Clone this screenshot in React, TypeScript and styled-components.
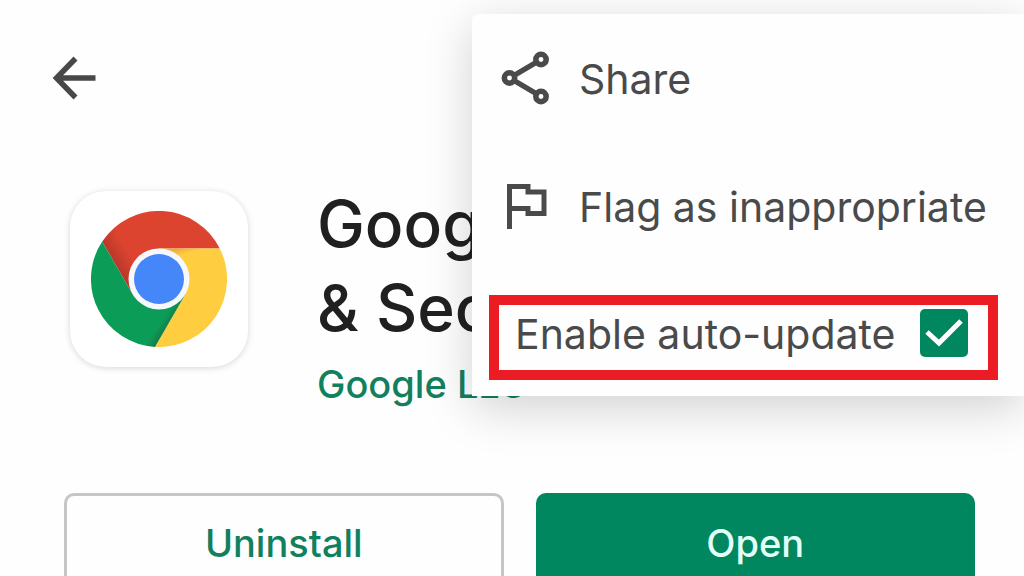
import React from 'react';
import styled, { createGlobalStyle } from 'styled-components';

const GlobalStyle = createGlobalStyle`
  * { box-sizing: border-box; }
  body {
    margin: 0;
    background: #fefefe;
    color: #202020;
    font-family: Inter, Roboto, sans-serif;
  }
`;

const Page = styled.div`
  position: relative;
  height: 100vh;
  overflow: hidden;
  padding: 54px 49px 0 64px;
`;

const BackButton = styled.button`
  display: block;
  margin: 0 0 0 -14px;
  padding: 0;
  border: 0;
  background: none;
  color: #484848;
  line-height: 0;
`;

const AppHeader = styled.header`
  display: flex;
  gap: 69px;
  margin-top: 80px;
  padding-left: 6px;
`;

const AppIcon = styled.div`
  display: flex;
  flex: none;
  align-items: center;
  justify-content: center;
  width: 178px;
  height: 176px;
  margin-top: 9px;
  border-radius: 36px;
  background: #fff;
  box-shadow: 0 1px 6px rgba(0, 0, 0, 0.16);
`;

const Title = styled.h1`
  margin: 0;
  font-size: 64px;
  font-weight: 500;
  line-height: 84px;
  white-space: nowrap;
`;

const Developer = styled.a`
  display: block;
  margin-top: 12px;
  color: #11805e;
  font-size: 38px;
  font-weight: 500;
  line-height: 44px;
  text-decoration: none;
`;

const Actions = styled.div`
  display: grid;
  grid-template-columns: 1fr 1fr;
  gap: 32px;
  margin-top: 87px;
`;

const ActionButton = styled.button<{ $filled?: boolean }>`
  height: 100px;
  border: 3px solid ${(p) => (p.$filled ? '#01875f' : '#c6c6c6')};
  border-radius: 10px;
  background: ${(p) => (p.$filled ? '#01875f' : '#fefefe')};
  color: ${(p) => (p.$filled ? '#e4fff6' : '#11805e')};
  font-family: inherit;
  font-size: 38px;
  font-weight: 500;
`;

const Menu = styled.div`
  position: absolute;
  top: 14px;
  left: 472px;
  right: 0;
  padding: 17px 26px 16px 17px;
  border-radius: 6px 0 0 0;
  background: #fefefe;
  box-shadow: 0 12px 48px rgba(0, 0, 0, 0.18);
  color: #4a4a4a;
  font-size: 41px;
`;

const MenuItem = styled.button`
  display: flex;
  align-items: center;
  gap: 24px;
  width: 100%;
  height: 96px;
  margin-bottom: 32px;
  padding: 0 0 0 10px;
  border: 0;
  background: none;
  color: inherit;
  font: inherit;
  white-space: nowrap;
`;

const CheckItem = styled.label`
  display: flex;
  align-items: center;
  justify-content: space-between;
  height: 85px;
  margin-top: 40px;
  padding: 0 20px 8px 16px;
  border: 10px solid #ec1c24;
  white-space: nowrap;
`;

const CheckWrap = styled.span`
  position: relative;
  width: 48px;
  height: 48px;
  margin-bottom: 2px;
`;

const Checkbox = styled.input`
  appearance: none;
  display: block;
  width: 48px;
  height: 48px;
  margin: 0;
  border-radius: 5px;
  background: #01875f;
`;

const Tick = styled.svg`
  position: absolute;
  inset: 0;
  pointer-events: none;
`;

const BackIcon = () => (
  <svg width="48" height="48" viewBox="0 0 48 48" fill="none" stroke="currentColor" strokeWidth="5.500" aria-hidden="true">
    <path d="M45.500 24H7M25.500 4.500L6.500 24l19 19.500" />
  </svg>
);

const ShareIcon = () => (
  <svg width="56" height="56" viewBox="0 0 56 56" fill="none" stroke="currentColor" strokeWidth="5.500" aria-hidden="true">
    <path d="M15 24.500L37 11.500M15 29.500l22 13" />
    <circle cx="10.500" cy="27" r="5.200" />
    <circle cx="42" cy="8.500" r="5.200" />
    <circle cx="42" cy="45.500" r="5.200" />
  </svg>
);

const FlagIcon = () => (
  <svg width="56" height="56" viewBox="0 0 56 56" fill="none" stroke="currentColor" strokeWidth="5" aria-hidden="true">
    <path d="M10.500 50V7.500H29V13H45V34.500H29V29.500H10.500" />
  </svg>
);

const ChromeLogo = () => (
  <svg width="136" height="136" viewBox="-68 -68 136 136" role="img" aria-label="Chrome">
    <defs>
      <linearGradient id="red" gradientUnits="userSpaceOnUse" x1="-42" y1="-11" x2="-27" y2="-20">
        <stop offset="0" stopColor="#b8372a" />
        <stop offset="1" stopColor="#dc4430" />
      </linearGradient>
      <linearGradient id="yellow" gradientUnits="userSpaceOnUse" x1="20" y1="-31" x2="22" y2="-24">
        <stop offset="0" stopColor="#eba936" />
        <stop offset="1" stopColor="#fecd40" />
      </linearGradient>
      <linearGradient id="green" gradientUnits="userSpaceOnUse" x1="11" y1="42" x2="5" y2="38">
        <stop offset="0" stopColor="#14804a" />
        <stop offset="1" stopColor="#0b9d58" />
      </linearGradient>
    </defs>
    <path fill="url(#red)" d="M60.800-30.500H0V0L-26.400 15.250L-56.800-37.400A68 68 0 0 1 60.800-30.500Z" />
    <path fill="url(#yellow)" d="M60.800-30.500H0V0L26.400 15.250L-4 67.900A68 68 0 0 0 60.800-30.500Z" />
    <path fill="url(#green)" d="M-4 67.900L26.400 15.250L0 0L-26.400 15.250L-56.800-37.400A68 68 0 0 0-4 67.900Z" />
    <circle r="30.500" fill="#f7f8fc" />
    <circle r="25" fill="#4586f8" />
  </svg>
);

export default function App() {
  return (
    <Page>
      <GlobalStyle />
      <BackButton aria-label="Back">
        <BackIcon />
      </BackButton>
      <AppHeader>
        <AppIcon>
          <ChromeLogo />
        </AppIcon>
        <div>
          <Title>
            Google
            <br />
            &amp; Secure
          </Title>
          <Developer href="#developer">Google LLC</Developer>
        </div>
      </AppHeader>
      <Actions>
        <ActionButton>Uninstall</ActionButton>
        <ActionButton $filled>Open</ActionButton>
      </Actions>
      <Menu>
        <MenuItem>
          <ShareIcon />
          Share
        </MenuItem>
        <MenuItem>
          <FlagIcon />
          Flag as inappropriate
        </MenuItem>
        <CheckItem>
          Enable auto-update
          <CheckWrap>
            <Checkbox type="checkbox" defaultChecked />
            <Tick width="48" height="48" viewBox="0 0 48 48" fill="none" stroke="#fff" strokeWidth="5" aria-hidden="true">
              <path d="M7 23l12 11L41 12" />
            </Tick>
          </CheckWrap>
        </CheckItem>
      </Menu>
    </Page>
  );
}
